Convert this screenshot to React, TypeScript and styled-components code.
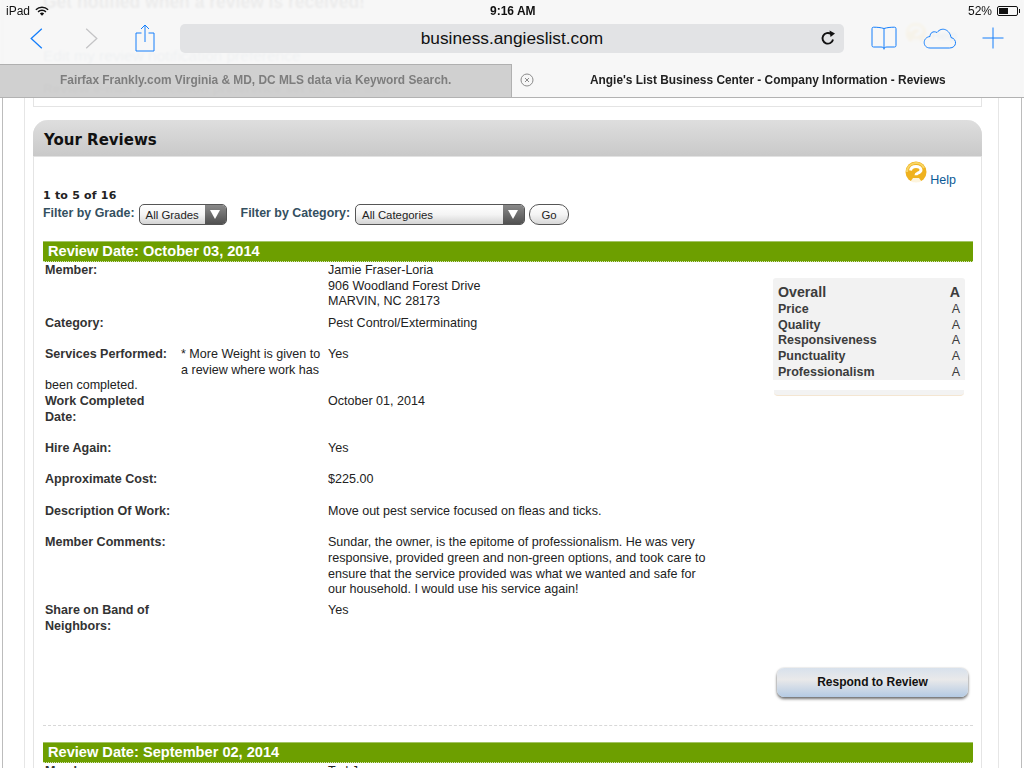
import React from 'react'
import styled, { createGlobalStyle } from 'styled-components'

const GlobalStyle = createGlobalStyle`
  html, body {
    margin: 0;
    padding: 0;
    width: 1024px;
    height: 768px;
    overflow: hidden;
    background: #fff;
    font-family: 'Liberation Sans', Arial, sans-serif;
  }
`

const ratings = [
  ['Price', 'A'],
  ['Quality', 'A'],
  ['Responsiveness', 'A'],
  ['Punctuality', 'A'],
  ['Professionalism', 'A'],
]

const HelpIcon = () => (
  <svg width="22" height="22" viewBox="0 0 22 22">
    <circle cx="11" cy="11" r="10.5" fill="#efb21f" />
    <path d="M2 11a9 9 0 0 1 17-4" fill="none" stroke="#f8d565" strokeWidth="2" />
    <path d="M5.500 9.500C6 6.500 8.500 5.500 11 5.500c3 0 5 1.500 5 3.500 0 2-2 2.700-3.500 3.300-1 .4-1.500 1-1.500 2" fill="none" stroke="#fff" strokeWidth="3" />
    <path d="M8 17h6l2.500 3.500a10 10 0 0 1-11 0z" fill="#fff" opacity="0.85" />
  </svg>
)

const App: React.FC = () => {
  return (
    <Viewport>
      <GlobalStyle />
      <Page>
        <OuterFrame>
          <InnerFrame>
            <NotifyCard>
              <NotifyTitle>Get notified when a review is received!</NotifyTitle>
              <GhostHelp>
                <HelpIcon />
                <HelpLink>Help</HelpLink>
              </GhostHelp>
              <NotifyLink>Edit my review notification preference</NotifyLink>
              <NotifyStatus>
                <strong>Review e-mail notification preference set to:</strong> Each time
              </NotifyStatus>
            </NotifyCard>

            <ReviewsCard>
              <CardHeader>Your Reviews</CardHeader>
              <HelpRow>
                <HelpIcon />
                <HelpLink>Help</HelpLink>
              </HelpRow>
              <CardBody>
                <PageCount>1 to 5 of 16</PageCount>
                <FilterRow>
                  <FilterLabel>Filter by Grade:</FilterLabel>
                  <FakeSelect $width={88}>
                    All Grades
                    <SelectArrow />
                  </FakeSelect>
                  <FilterLabel $indent>Filter by Category:</FilterLabel>
                  <FakeSelect $width={170}>
                    All Categories
                    <SelectArrow />
                  </FakeSelect>
                  <GoButton>Go</GoButton>
                </FilterRow>

                <DateBar>Review Date: October 03, 2014</DateBar>
                <ReviewGrid>
                  <div>
                    <Row $after={5.5}>
                      <RowLabel>Member:</RowLabel>
                      <RowNote />
                      <div>
                        Jamie Fraser-Loria
                        <br />
                        906 Woodland Forest Drive
                        <br />
                        MARVIN, NC 28173
                      </div>
                    </Row>
                    <Row>
                      <RowLabel>Category:</RowLabel>
                      <RowNote />
                      <div>Pest Control/Exterminating</div>
                    </Row>
                    <Row $after={0}>
                      <RowLabel>Services Performed:</RowLabel>
                      <RowNote>* More Weight is given to a review where work has</RowNote>
                      <div>Yes</div>
                    </Row>
                    <div>been completed.</div>
                    <Row>
                      <RowLabel>Work Completed Date:</RowLabel>
                      <RowNote />
                      <div>October 01, 2014</div>
                    </Row>
                    <Row>
                      <RowLabel>Hire Again:</RowLabel>
                      <RowNote />
                      <div>Yes</div>
                    </Row>
                    <Row $after={16.2}>
                      <RowLabel>Approximate Cost:</RowLabel>
                      <RowNote />
                      <div>$225.00</div>
                    </Row>
                    <Row>
                      <RowLabel>Description Of Work:</RowLabel>
                      <RowNote />
                      <div>Move out pest service focused on fleas and ticks.</div>
                    </Row>
                    <Row $after={5}>
                      <RowLabel>Member Comments:</RowLabel>
                      <RowNote />
                      <div>
                        Sundar, the owner, is the epitome of professionalism. He was very responsive,
                        provided green and non-green options, and took care to ensure that the service
                        provided was what we wanted and safe for our household. I would use his service
                        again!
                      </div>
                    </Row>
                    <Row $after={0}>
                      <RowLabel>Share on Band of Neighbors:</RowLabel>
                      <RowNote />
                      <div>Yes</div>
                    </Row>
                  </div>
                  <RatingAside>
                    <RatingPanel>
                      <OverallRow>
                        <span>Overall</span>
                        <span>A</span>
                      </OverallRow>
                      {ratings.map(([name, grade]) => (
                        <RatingRow key={name}>
                          <span>{name}</span>
                          <RatingGrade>{grade}</RatingGrade>
                        </RatingRow>
                      ))}
                    </RatingPanel>
                    <RatingFoot />
                  </RatingAside>
                </ReviewGrid>
                <RespondRow>
                  <RespondButton>Respond to Review</RespondButton>
                </RespondRow>
                <Separator />
                <DateBar>Review Date: September 02, 2014</DateBar>
                <ReviewGrid>
                  <div>
                    <Row $after={0}>
                      <RowLabel>Member:</RowLabel>
                      <RowNote />
                      <div>Ted Jones</div>
                    </Row>
                  </div>
                </ReviewGrid>
              </CardBody>
            </ReviewsCard>
          </InnerFrame>
        </OuterFrame>
      </Page>

      <BrowserChrome>
        <StatusBar>
          <StatusSide>
            <span>iPad</span>
            <svg width="14" height="10" viewBox="0 0 16 11">
              <path d="M1 4a10 10 0 0 1 14 0" fill="none" stroke="#111" strokeWidth="1.6" />
              <path d="M3.5 6.5a6.5 6.5 0 0 1 9 0" fill="none" stroke="#111" strokeWidth="1.6" />
              <path d="M5.5 8.3L8 10.8l2.5-2.5a3.6 3.6 0 0 0-5 0z" fill="#111" />
            </svg>
          </StatusSide>
          <StatusTime>9:16 AM</StatusTime>
          <StatusSide>
            <span>52%</span>
            <Battery>
              <BatteryLevel />
            </Battery>
          </StatusSide>
        </StatusBar>

        <Toolbar>
          <NavGroup>
            <svg width="13" height="21" viewBox="0 0 13 21">
              <path d="M11.800 0.700L1.200 10.500l10.600 9.800" fill="none" stroke="#147efb" strokeWidth="1.3" />
            </svg>
            <svg width="13" height="21" viewBox="0 0 13 21">
              <path d="M1.200 0.700L11.800 10.500 1.200 20.300" fill="none" stroke="#c4c4c6" strokeWidth="1.3" />
            </svg>
            <svg width="20" height="28" viewBox="0 0 20 28">
              <path d="M6.500 9H1v18h18V9h-5.500M10 1v17M6 5l4-4 4 4" fill="none" stroke="#147efb" strokeWidth="1" />
            </svg>
          </NavGroup>
          <AddressBar>
            <AddressText>business.angieslist.com</AddressText>
            <ReloadIcon width="16" height="16" viewBox="0 0 16 16">
              <path d="M13 9.500a5.300 5.300 0 1 1-2-5.400" fill="none" stroke="#111" strokeWidth="1.900" />
              <path d="M9.500 0.500l5.500 3-4.500 3.500z" fill="#111" />
            </ReloadIcon>
          </AddressBar>
          <ActionGroup>
            <svg width="26" height="24" viewBox="0 0 26 24">
              <path d="M13 2.500C10 1.500 6 1.200 2.500 1.200A1.500 1.500 0 0 0 1 2.700V19.500A1.500 1.500 0 0 0 2.500 21H10c1.500 0 3 .5 3 1.500 0-1 1.500-1.500 3-1.500h7.500a1.500 1.500 0 0 0 1.500-1.500V2.700a1.500 1.500 0 0 0-1.500-1.500C20 1.200 16 1.500 13 2.500zM13 2.500v21" fill="none" stroke="#147efb" strokeWidth="1" />
            </svg>
            <svg width="35" height="22" viewBox="0 0 35 22">
              <path d="M8 21h19.500c7.500 0 8-9 1.500-10.500C28 3 20 -1 15 5.500 11 3.500 8 6 8 9.500 0 10.500 .5 21 8 21z" fill="none" stroke="#147efb" strokeWidth="1" />
            </svg>
            <svg width="22" height="22" viewBox="0 0 22 22">
              <path d="M11 0.500v21M0.500 11h21" fill="none" stroke="#147efb" strokeWidth="1" />
            </svg>
          </ActionGroup>
        </Toolbar>

        <TabBar>
          <Tab>Fairfax Frankly.com Virginia &amp; MD, DC MLS data via Keyword Search.</Tab>
          <Tab $active>
            <TabClose width="14" height="14" viewBox="0 0 14 14">
              <circle cx="7" cy="7" r="6" fill="none" stroke="#8a8a8a" />
              <path d="M5 5l4 4M9 5l-4 4" stroke="#8a8a8a" />
            </TabClose>
            Angie's List Business Center - Company Information - Reviews
          </Tab>
        </TabBar>
      </BrowserChrome>
    </Viewport>
  )
}

const Viewport = styled.div`
  position: relative;
  width: 1024px;
  height: 768px;
  overflow: hidden;
  background: #fff;
`

const Page = styled.div`
  margin-top: -9px;
  padding: 0 2px 0 2px;
`

const OuterFrame = styled.div`
  border-left: 1px solid #bcbcbc;
  border-right: 1px solid #bcbcbc;
  padding: 0 22px 0 21px;
`

const InnerFrame = styled.div`
  border-left: 1px solid #e6e6e6;
  border-right: 1px solid #e6e6e6;
  padding: 0 16px 0 8px;
`

const NotifyCard = styled.div`
  position: relative;
  height: 116px;
  box-sizing: border-box;
  padding: 0 9px;
  border: 1px solid #e4e4e4;
  border-top: none;
  color: #333;
`

const NotifyTitle = styled.div`
  font-size: 17.5px;
  font-weight: bold;
  line-height: 22px;
`

const GhostHelp = styled.div`
  position: absolute;
  right: 24px;
  top: 31px;
  display: flex;
  align-items: flex-end;
  gap: 4px;
`

const NotifyLink = styled.div`
  margin-top: 33px;
  font-size: 15.5px;
  line-height: 20px;
  color: #5f7f9a;
`

const NotifyStatus = styled.div`
  margin-top: 15px;
  font-size: 13.5px;
  line-height: 16px;
`

const ReviewsCard = styled.div`
  margin-top: 13px;
  border: 1px solid #e4e4e4;
  border-top: none;
  border-radius: 15px 15px 0 0;
`

const CardHeader = styled.div`
  height: 36px;
  margin: 0 -1px;
  padding-left: 11px;
  border-radius: 15px 15px 0 0;
  border-bottom: 1px solid #e2e2e2;
  background: linear-gradient(#dedede, #c9c9c9);
  font-family: 'DejaVu Sans', Arial, sans-serif;
  font-size: 15px;
  font-weight: bold;
  line-height: 40px;
  color: #111;
`

const HelpRow = styled.div`
  display: flex;
  justify-content: flex-end;
  align-items: flex-start;
  gap: 3px;
  height: 30px;
  padding-right: 25px;
  padding-top: 4px;
  box-sizing: border-box;

  & > span {
    margin-top: 12px;
  }
`

const HelpLink = styled.span`
  font-size: 12.5px;
  line-height: 15px;
  color: #0a5a96;
`

const CardBody = styled.div`
  padding: 1px 8px 0 9px;
  font-size: 12.55px;
  line-height: 15.7px;
  color: #222;
`

const PageCount = styled.div`
  font-family: 'DejaVu Sans', Arial, sans-serif;
  font-size: 11px;
  font-weight: bold;
  line-height: 15px;
  letter-spacing: 0.2px;
  color: #222;
`

const FilterRow = styled.div`
  display: flex;
  align-items: center;
  height: 22px;
`

const FilterLabel = styled.span<{ $indent?: boolean }>`
  margin-left: ${({ $indent }) => ($indent ? '14px' : '0')};
  margin-right: ${({ $indent }) => ($indent ? '5px' : '4px')};
  font-size: 12.4px;
  font-weight: bold;
  color: #34505f;
`

const FakeSelect = styled.div<{ $width: number }>`
  position: relative;
  box-sizing: border-box;
  width: ${({ $width }) => $width}px;
  height: 21px;
  padding-left: 6px;
  border: 1px solid #555;
  border-radius: 5px;
  background: linear-gradient(#fff, #f4f4f4 50%, #d4d4d4);
  font-size: 11.4px;
  line-height: 20px;
  color: #222;
`

const SelectArrow = styled.span`
  position: absolute;
  top: 0;
  right: 0;
  bottom: 0;
  width: 21px;
  border-radius: 0 4px 4px 0;
  background: linear-gradient(#8a8a8a, #505050);

  &::after {
    content: '';
    position: absolute;
    left: 5px;
    top: 5px;
    border-left: 5.5px solid transparent;
    border-right: 5.5px solid transparent;
    border-top: 9px solid #fff;
  }
`

const GoButton = styled.div`
  box-sizing: border-box;
  width: 40px;
  height: 21px;
  margin-left: 4px;
  border: 1px solid #555;
  border-radius: 10px;
  background: linear-gradient(#fff, #f4f4f4 50%, #d8d8d8);
  font-size: 11.4px;
  line-height: 20px;
  text-align: center;
  color: #222;
`

const DateBar = styled.div`
  box-sizing: border-box;
  height: 21px;
  margin-top: 16px;
  padding-left: 5px;
  border-top: 1px solid #a3c466;
  border-bottom: 1px dotted #d3e3b2;
  background: #6d9f00;
  font-size: 14.6px;
  font-weight: bold;
  line-height: 19px;
  color: #fff;
`

const ReviewGrid = styled.div`
  display: grid;
  grid-template-columns: 682px 192px;
  column-gap: 46px;
  padding: 1px 0 0 2px;
`

const Row = styled.div<{ $after?: number }>`
  display: grid;
  grid-template-columns: 136px 147px 382px;
  margin-bottom: ${({ $after }) => $after ?? 15.5}px;
`

const RowLabel = styled.div`
  width: 128px;
  font-weight: bold;
  color: #333;
`

const RowNote = styled.div`
  padding-right: 4px;
`

const RatingAside = styled.div`
  padding-top: 15px;
`

const RatingPanel = styled.div`
  box-sizing: border-box;
  height: 102px;
  padding: 6px 5px 0 5px;
  border-radius: 3px 3px 0 0;
  background: #f2f2f2;
`

const RatingRow = styled.div`
  display: flex;
  justify-content: space-between;
  font-size: 12.5px;
  font-weight: bold;
  color: #3c3c3c;
`

const OverallRow = styled(RatingRow)`
  font-size: 14.2px;
  line-height: 17px;
  margin-bottom: 1px;
`

const RatingGrade = styled.span`
  font-weight: normal;
`

const RatingFoot = styled.div`
  height: 5px;
  margin: 10px 1px 0;
  border-radius: 0 0 4px 4px;
  border-bottom: 1px solid #f4e6d2;
  background: #f3f3f3;
`

const RespondRow = styled.div`
  display: flex;
  justify-content: flex-end;
  padding-right: 5px;
  margin-top: 34px;
`

const RespondButton = styled.div`
  box-sizing: border-box;
  width: 191px;
  height: 29px;
  border-radius: 7px;
  background: linear-gradient(#d8e1ec, #e9e9ea 40%, #b4cae3);
  box-shadow: 0 2px 3px rgba(0, 0, 0, 0.55), 0 0 2px rgba(0, 0, 0, 0.2);
  font-size: 12px;
  font-weight: bold;
  line-height: 29px;
  text-align: center;
  color: #111;
`

const Separator = styled.div`
  margin-top: 28px;
  border-top: 1px dashed #d8d8d8;
`

const BrowserChrome = styled.div`
  position: absolute;
  top: 0;
  left: 0;
  right: 0;
  background: rgba(247, 247, 247, 0.94);
  backdrop-filter: blur(1px);
  border-bottom: 1px solid #b2b2b2;
`

const StatusBar = styled.div`
  display: flex;
  justify-content: space-between;
  align-items: center;
  height: 22px;
  padding: 0 6px 0 6px;
  font-size: 12px;
  color: #111;
`

const StatusSide = styled.div`
  display: flex;
  align-items: center;
  gap: 5px;
`

const StatusTime = styled.span`
  position: absolute;
  left: 490px;
  font-weight: bold;
`

const Battery = styled.div`
  position: relative;
  box-sizing: border-box;
  width: 21px;
  height: 10px;
  padding: 1px;
  border: 1px solid #111;
  border-radius: 2px;

  &::after {
    content: '';
    position: absolute;
    right: -3px;
    top: 2px;
    width: 1px;
    height: 4px;
    background: #111;
  }
`

const BatteryLevel = styled.div`
  width: 52%;
  height: 100%;
  background: #111;
`

const Toolbar = styled.div`
  display: flex;
  align-items: center;
  box-sizing: border-box;
  height: 42px;
  padding-bottom: 10px;
`

const NavGroup = styled.div`
  display: grid;
  grid-template-columns: 55px 50px auto;
  align-items: center;
  width: 180px;
  box-sizing: border-box;
  padding-left: 30px;
`

const AddressBar = styled.div`
  position: relative;
  width: 664px;
  height: 29px;
  border-radius: 5px;
  background: #e2e3e5;
  text-align: center;
`

const AddressText = styled.span`
  font-size: 17.3px;
  line-height: 29px;
  color: #111;
`

const ReloadIcon = styled.svg`
  position: absolute;
  right: 8px;
  top: 6px;
`

const ActionGroup = styled.div`
  display: flex;
  align-items: center;
  gap: 25px;
  margin-left: 27px;
`

const TabBar = styled.div`
  display: grid;
  grid-template-columns: 512px 512px;
  height: 33px;
`

const Tab = styled.div<{ $active?: boolean }>`
  position: relative;
  box-sizing: border-box;
  border-top: ${({ $active }) => ($active ? 'none' : '1px solid #b0b0b0')};
  border-right: ${({ $active }) => ($active ? 'none' : '1px solid #b0b0b0')};
  background: ${({ $active }) => ($active ? 'transparent' : 'rgba(192, 192, 192, 0.7)')};
  padding-left: ${({ $active }) => ($active ? '78px' : '60px')};
  font-size: 11.9px;
  font-weight: bold;
  line-height: ${({ $active }) => ($active ? '32px' : '30px')};
  color: ${({ $active }) => ($active ? '#222' : '#7d7d7d')};
`

const TabClose = styled.svg`
  position: absolute;
  left: 8px;
  top: 9px;
`

export default App
